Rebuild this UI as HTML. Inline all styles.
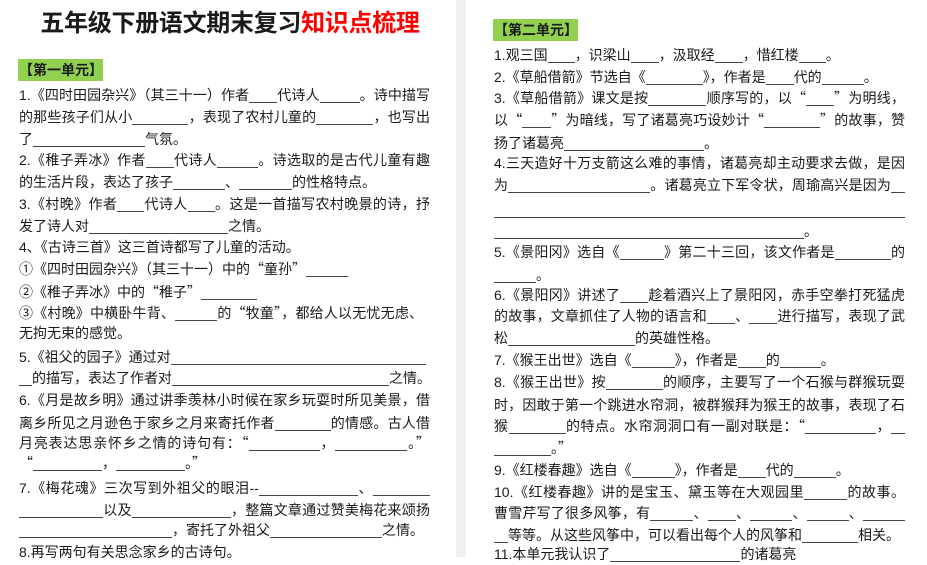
<!DOCTYPE html>
<html><head><meta charset="utf-8"><style>
*{margin:0;padding:0;box-sizing:border-box}
body{width:927px;height:557px;overflow:hidden;background:#fff;position:relative;font-family:"Liberation Sans","Noto Sans CJK SC",sans-serif;font-size:14px;color:#1a1a1a}
.gap{position:absolute;left:456px;top:0;width:10px;height:557px;background:#eef0f3}
.l{position:absolute;height:22px;line-height:22px;white-space:nowrap;width:411px}
.L{left:19px}.R{left:494px}
.j{text-align:justify;text-align-last:justify}
.b{display:inline-block;border-bottom:1px solid #444;height:15px;vertical-align:-3px}
.q{font-family:"Noto Sans CJK SC",sans-serif;font-style:normal}
.h{position:absolute;background:#92d050;font-weight:bold;height:22px;line-height:22px;width:85px;padding-left:1px;font-size:14px}
.t{position:absolute;left:0;width:460px;top:9px;text-align:center;font-size:24px;font-weight:bold;line-height:30px;font-family:"Liberation Sans","Noto Sans CJK SC",sans-serif;letter-spacing:-0.3px}
</style></head><body>
<div class="gap"></div>
<div class="t">五年级下册语文期末复习<span style="color:#f00">知识点梳理</span></div>
<div class="h" style="left:18px;top:59px">【第一单元】</div>
<div class="l L j" style="top:84px">1.《四时田园杂兴》（其三十一）作者<span class="b" style="width:28px"></span>代诗人<span class="b" style="width:40px"></span>。诗中描写</div>
<div class="l L j" style="top:106px">的那些孩子们从小<span class="b" style="width:56px"></span>，表现了农村儿童的<span class="b" style="width:57px"></span>，也写出</div>
<div class="l L" style="top:128px">了<span class="b" style="width:112px"></span>气氛。</div>
<div class="l L j" style="top:149px">2.《稚子弄冰》作者<span class="b" style="width:28px"></span>代诗人<span class="b" style="width:41px"></span>。诗选取的是古代儿童有趣</div>
<div class="l L" style="top:171px">的生活片段，表达了孩子<span class="b" style="width:52px"></span>、<span class="b" style="width:53px"></span>的性格特点。</div>
<div class="l L j" style="top:193px">3.《村晚》作者<span class="b" style="width:27px"></span>代诗人<span class="b" style="width:27px"></span>。这是一首描写农村晚景的诗，抒</div>
<div class="l L" style="top:215px">发了诗人对<span class="b" style="width:139px"></span>之情。</div>
<div class="l L" style="top:236px">4、《古诗三首》这三首诗都写了儿童的活动。</div>
<div class="l L" style="top:258px">①《四时田园杂兴》（其三十一）中的<i class="q">“</i>童孙<i class="q">”</i><span class="b" style="width:42px"></span></div>
<div class="l L" style="top:281px">②《稚子弄冰》中的<i class="q">“</i>稚子<i class="q">”</i><span class="b" style="width:56px"></span></div>
<div class="l L j" style="top:302px;width:404px">③《村晚》中横卧牛背、<span class="b" style="width:42px"></span>的<i class="q">“</i>牧童<i class="q">”</i>，都给人以无忧无虑、</div>
<div class="l L" style="top:322px">无拘无束的感觉。</div>
<div class="l L" style="top:346px">5.《祖父的园子》通过对<span class="b" style="width:255px"></span></div>
<div class="l L" style="top:367px"><span class="b" style="width:13px"></span>的描写，表达了作者对<span class="b" style="width:217px"></span>之情。</div>
<div class="l L j" style="top:389px">6.《月是故乡明》通过讲季羡林小时候在家乡玩耍时所见美景，借</div>
<div class="l L j" style="top:412px">离乡所见之月逊色于家乡之月来寄托作者<span class="b" style="width:56px"></span>的情感。古人借</div>
<div class="l L j" style="top:432px">月亮表达思亲怀乡之情的诗句有：<i class="q">“</i><span class="b" style="width:71px"></span>，<span class="b" style="width:72px"></span>。<i class="q">”</i></div>
<div class="l L" style="top:452px"><i class="q">“</i><span class="b" style="width:69px"></span>，<span class="b" style="width:69px"></span>。<i class="q">”</i></div>
<div class="l L j" style="top:477px">7.《梅花魂》三次写到外祖父的眼泪--<span class="b" style="width:99px"></span>、<span class="b" style="width:57px"></span></div>
<div class="l L j" style="top:499px"><span class="b" style="width:84px"></span>以及<span class="b" style="width:99px"></span>，整篇文章通过赞美梅花来颂扬</div>
<div class="l L" style="top:519px"><span class="b" style="width:153px"></span>，寄托了外祖父<span class="b" style="width:112px"></span>之情。</div>
<div class="l L" style="top:541px">8.再写两句有关思念家乡的古诗句。</div>

<div class="h" style="left:493px;top:19px">【第二单元】</div>
<div class="l R" style="top:44px">1.观三国<span class="b" style="width:27px"></span>，识梁山<span class="b" style="width:28px"></span>，汲取经<span class="b" style="width:28px"></span>，惜红楼<span class="b" style="width:27px"></span>。</div>
<div class="l R" style="top:66px">2.《草船借箭》节选自《<span class="b" style="width:57px"></span>》，作者是<span class="b" style="width:28px"></span>代的<span class="b" style="width:42px"></span>。</div>
<div class="l R j" style="top:87px">3.《草船借箭》课文是按<span class="b" style="width:58px"></span>顺序写的，以<i class="q">“</i><span class="b" style="width:28px"></span><i class="q">”</i>为明线，</div>
<div class="l R j" style="top:109px">以<i class="q">“</i><span class="b" style="width:29px"></span><i class="q">”</i>为暗线，写了诸葛亮巧设妙计<i class="q">“</i><span class="b" style="width:56px"></span><i class="q">”</i>的故事，赞</div>
<div class="l R" style="top:132px">扬了诸葛亮<span class="b" style="width:140px"></span>。</div>
<div class="l R j" style="top:152px">4.三天造好十万支箭这么难的事情，诸葛亮却主动要求去做，是因</div>
<div class="l R j" style="top:174px">为<span class="b" style="width:142px"></span>。诸葛亮立下军令状，周瑜高兴是因为<span class="b" style="width:14px"></span></div>
<div class="l R" style="top:199px"><span class="b" style="width:411px"></span></div>
<div class="l R" style="top:220px"><span class="b" style="width:310px"></span>。</div>
<div class="l R j" style="top:241px">5.《景阳冈》选自《<span class="b" style="width:44px"></span>》第二十三回，该文作者是<span class="b" style="width:56px"></span>的</div>
<div class="l R" style="top:264px"><span class="b" style="width:42px"></span>。</div>
<div class="l R j" style="top:284px">6.《景阳冈》讲述了<span class="b" style="width:28px"></span>趁着酒兴上了景阳冈，赤手空拳打死猛虎</div>
<div class="l R j" style="top:305px">的故事，文章抓住了人物的语言和<span class="b" style="width:28px"></span>、<span class="b" style="width:28px"></span>进行描写，表现了武</div>
<div class="l R" style="top:327px">松<span class="b" style="width:127px"></span>的英雄性格。</div>
<div class="l R" style="top:349px">7.《猴王出世》选自《<span class="b" style="width:43px"></span>》，作者是<span class="b" style="width:28px"></span>的<span class="b" style="width:41px"></span>。</div>
<div class="l R j" style="top:371px">8.《猴王出世》按<span class="b" style="width:57px"></span>的顺序，主要写了一个石猴与群猴玩耍</div>
<div class="l R j" style="top:394px">时，因敢于第一个跳进水帘洞，被群猴拜为猴王的故事，表现了石</div>
<div class="l R j" style="top:415px">猴<span class="b" style="width:57px"></span>的特点。水帘洞洞口有一副对联是：<i class="q">“</i><span class="b" style="width:71px"></span>，<span class="b" style="width:14px"></span></div>
<div class="l R" style="top:437px"><span class="b" style="width:57px"></span>。<i class="q">”</i></div>
<div class="l R" style="top:459px">9.《红楼春趣》选自《<span class="b" style="width:43px"></span>》，作者是<span class="b" style="width:28px"></span>代的<span class="b" style="width:42px"></span>。</div>
<div class="l R j" style="top:481px">10.《红楼春趣》讲的是宝玉、黛玉等在大观园里<span class="b" style="width:43px"></span>的故事。</div>
<div class="l R j" style="top:502px">曹雪芹写了很多风筝，有<span class="b" style="width:43px"></span>、<span class="b" style="width:28px"></span>、<span class="b" style="width:42px"></span>、<span class="b" style="width:42px"></span>、<span class="b" style="width:42px"></span></div>
<div class="l R" style="top:524px"><span class="b" style="width:14px"></span>等等。从这些风筝中，可以看出每个人的风筝和<span class="b" style="width:56px"></span>相关。</div>
<div class="l R" style="top:543px">11.本单元我认识了<span class="b" style="width:130px"></span>的诸葛亮</div>
</body></html>
